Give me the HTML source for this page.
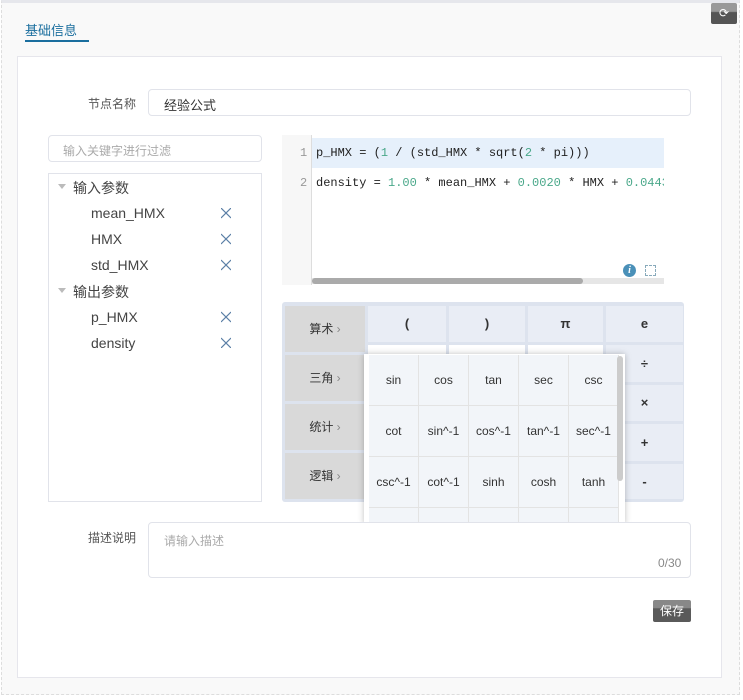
<!DOCTYPE html>
<html><head><meta charset="utf-8"><style>
*{box-sizing:border-box;margin:0;padding:0}
body{width:743px;height:700px;background:#fff;font-family:"Liberation Sans","Noto Sans CJK SC",sans-serif;position:relative;overflow:hidden;font-size:13px;color:#333}
.a{position:absolute}
.outer{left:1px;top:0;width:739px;height:695px;background:#f9f9f9;border:1px dashed #ddd;border-top:3px solid #e6e7ec}
.panel{left:17px;top:56px;width:705px;height:622px;background:#fff;border:1px solid #e6e6ec}
.inp{border:1px solid #e1e3ea;border-radius:4px;background:#fff}
.lbl{font-size:12px;color:#555;text-align:right;width:90px}
.cat{left:285px;width:80px;height:46px;background:#d9d9d9;font-size:12px;color:#333;text-align:center;line-height:46px}
.cat span{color:#888}
.btn{background:#e9edf5;font-weight:bold;font-size:13px;text-align:center;color:#333}
.cell{width:50px;height:51px;background:#f2f5f9;border-right:1px solid #e3e3e3;border-bottom:1px solid #e3e3e3;text-align:center;line-height:51px;font-size:12px;color:#333}
.ti{font-size:14px;color:#444}
.x{width:10px;height:10px}
.code{font-family:"Liberation Mono",monospace;font-size:12px;color:#222;white-space:pre}
.n{color:#4aa88a}
</style></head><body>
<div class="a outer"></div>
<div class="a" style="left:711px;top:3px;width:26px;height:21px;background:linear-gradient(#999,#999 40%,#555 45%,#555);border-radius:2px;color:#fff;font-size:12px;text-align:center;line-height:21px">⟳</div>
<div class="a" style="left:25px;top:20px;font-size:13px;color:#1a6e9e">基础信息</div>
<div class="a" style="left:25px;top:40px;width:64px;height:2px;background:#1a6e9e"></div>
<div class="a panel"></div>

<div class="a lbl" style="left:46px;top:95px">节点名称</div>
<div class="a inp" style="left:148px;top:89px;width:543px;height:27px;padding:5px 15px;font-size:13px">经验公式</div>

<div class="a inp" style="left:48px;top:135px;width:214px;height:27px;padding:6px 14px;font-size:12px;color:#aaa">输入关键字进行过滤</div>
<div class="a" style="left:48px;top:173px;width:214px;height:329px;border:1px solid #e1e3ea"></div>
<svg class="a" style="left:58px;top:184px" width="8" height="6"><path d="M0 0H8L4 5Z" fill="#bbb"/></svg>
<div class="a ti" style="left:73px;top:178px">输入参数</div>
<div class="a ti" style="left:91px;top:205px">mean_HMX</div>
<div class="a ti" style="left:91px;top:231px">HMX</div>
<div class="a ti" style="left:91px;top:257px">std_HMX</div>
<svg class="a" style="left:58px;top:288px" width="8" height="6"><path d="M0 0H8L4 5Z" fill="#bbb"/></svg>
<div class="a ti" style="left:73px;top:282px">输出参数</div>
<div class="a ti" style="left:91px;top:309px">p_HMX</div>
<div class="a ti" style="left:91px;top:335px">density</div>
<svg class="a" style="left:221px;top:208px" width="10" height="140" fill="none" stroke="#5b7fa6" stroke-width="1.2">
<path d="M0 0L10 10M10 0L0 10M0 26L10 36M10 26L0 36M0 52L10 62M10 52L0 62M0 104L10 114M10 104L0 114M0 130L10 140M10 130L0 140"/></svg>

<!-- editor -->
<div class="a" style="left:282px;top:135px;width:382px;height:150px;background:#fff;overflow:hidden">
 <div class="a" style="left:0;top:0;width:30px;height:150px;background:#f7f7f7;border-right:1px solid #ddd"></div>
 <div class="a" style="left:30px;top:3px;width:352px;height:30px;background:#e6f0fb"></div>
 <div class="a code" style="left:18px;top:11px;color:#999">1</div>
 <div class="a code" style="left:18px;top:41px;color:#999">2</div>
 <div class="a code" style="left:34px;top:11px">p_HMX = (<span class="n">1</span> / (std_HMX * sqrt(<span class="n">2</span> * pi)))</div>
 <div class="a code" style="left:34px;top:41px">density = <span class="n">1.00</span> * mean_HMX + <span class="n">0.0020</span> * HMX + <span class="n">0.0443</span></div>
 <div class="a" style="left:30px;top:143px;width:352px;height:6px;background:#e6e6e6"></div>
 <div class="a" style="left:30px;top:143px;width:271px;height:6px;background:#aaa;border-radius:3px"></div>
 <div class="a" style="left:341px;top:129px;width:13px;height:13px;border-radius:50%;background:#4a90b8;color:#fff;font:italic bold 10px 'Liberation Serif',serif;text-align:center;line-height:13px">i</div>
 <div class="a" style="left:363px;top:130px;width:11px;height:11px;border:1px dashed #8ab"></div>
</div>

<!-- calculator -->
<div class="a" style="left:282px;top:302px;width:402px;height:200px;background:#dde3ee;border-radius:3px"></div>
<div class="a cat" style="top:306px">算术 <span>›</span></div>
<div class="a cat" style="top:355px">三角 <span>›</span></div>
<div class="a cat" style="top:404px">统计 <span>›</span></div>
<div class="a cat" style="top:453px">逻辑 <span>›</span></div>
<div class="a btn" style="left:368px;top:306px;width:78px;height:36px;line-height:36px">(</div>
<div class="a btn" style="left:449px;top:306px;width:76px;height:36px;line-height:36px">)</div>
<div class="a btn" style="left:528px;top:306px;width:75px;height:36px;line-height:36px">π</div>
<div class="a btn" style="left:606px;top:306px;width:77px;height:36px;line-height:36px">e</div>
<div class="a" style="left:368px;top:345px;width:78px;height:37px;background:#fff"></div>
<div class="a" style="left:449px;top:345px;width:76px;height:37px;background:#fff"></div>
<div class="a" style="left:528px;top:345px;width:75px;height:37px;background:#fff"></div>
<div class="a btn" style="left:606px;top:345px;width:77px;height:37px;line-height:37px">÷</div>
<div class="a btn" style="left:606px;top:385px;width:77px;height:36px;line-height:36px">×</div>
<div class="a btn" style="left:606px;top:424px;width:77px;height:37px;line-height:37px">+</div>
<div class="a btn" style="left:606px;top:464px;width:77px;height:35px;line-height:35px">-</div>

<div class="a" style="left:364px;top:354px;width:261px;height:170px;background:#fff;box-shadow:0 0 6px rgba(0,0,0,.25);overflow:hidden">
 <div style="position:absolute;left:5px;top:1px;width:250px;display:flex;flex-wrap:wrap">
  <div class="cell">sin</div><div class="cell">cos</div><div class="cell">tan</div><div class="cell">sec</div><div class="cell">csc</div>
  <div class="cell">cot</div><div class="cell">sin^-1</div><div class="cell">cos^-1</div><div class="cell">tan^-1</div><div class="cell">sec^-1</div>
  <div class="cell">csc^-1</div><div class="cell">cot^-1</div><div class="cell">sinh</div><div class="cell">cosh</div><div class="cell">tanh</div>
  <div class="cell"></div><div class="cell"></div><div class="cell"></div><div class="cell"></div><div class="cell"></div>
 </div>
 <div class="a" style="left:253px;top:2px;width:6px;height:125px;background:#ccc;border-radius:3px"></div>
</div>

<div class="a lbl" style="left:46px;top:529px">描述说明</div>
<div class="a inp" style="left:148px;top:522px;width:543px;height:56px;padding:9px 15px;font-size:12px;color:#aaa">请输入描述</div>
<div class="a" style="left:658px;top:556px;font-size:12px;color:#888">0/30</div>
<div class="a" style="left:653px;top:600px;width:38px;height:22px;background:linear-gradient(#888,#888 35%,#5a5a5a 40%,#5a5a5a);border-radius:2px;color:#fff;font-size:12px;text-align:center;line-height:22px">保存</div>
</body></html>
